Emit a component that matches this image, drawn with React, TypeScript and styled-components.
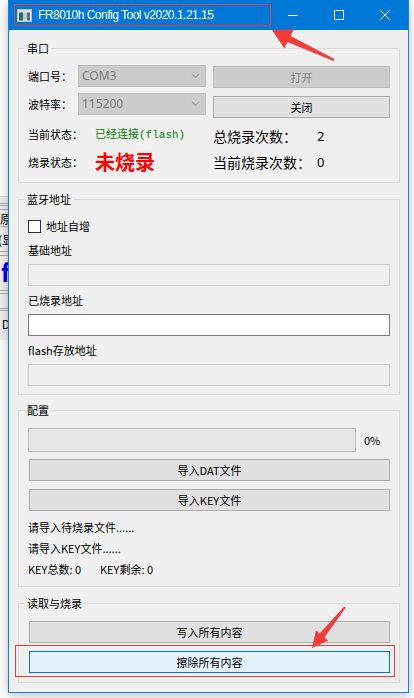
import React from 'react';
import styled, { createGlobalStyle } from 'styled-components';

const Global = createGlobalStyle`
  html, body { margin: 0; padding: 0; background: #ffffff; }
  body {
    width: 414px; height: 698px; overflow: hidden;
    font-family: "Noto Sans CJK SC", "Noto Sans", sans-serif;
  }
  * { box-sizing: border-box; }
`;

const Desktop = styled.div`
  position: relative;
  width: 414px;
  height: 698px;
  overflow: hidden;
  background: #ffffff;
`;

/* ---------- background window peeking at the left ---------- */
const BackWindow = styled.div`
  position: absolute;
  left: -112px;
  top: 196px;
  width: 120px;
  height: 144px;
  background: #f0f0f0;
  border-top: 1px solid #d9d9d9;
  display: flex;
  flex-direction: column;
  align-items: flex-end;
  padding-top: 6px;
`;

const BackRow = styled.div<{ $h: number; $mt?: number; $border?: boolean; $color?: string; $size?: number; $bold?: boolean }>`
  width: 100%;
  height: ${p => p.$h}px;
  margin-top: ${p => p.$mt ?? 0}px;
  border-top: ${p => (p.$border ? '1px solid #adadad' : 'none')};
  border-bottom: ${p => (p.$border ? '1px solid #adadad' : 'none')};
  display: flex;
  align-items: center;
  justify-content: flex-end;
  font-size: ${p => p.$size ?? 12}px;
  font-weight: ${p => (p.$bold ? 700 : 400)};
  color: ${p => p.$color ?? '#000'};
  white-space: nowrap;
  overflow: hidden;
`;

const BackText = styled.span<{ $shift: number }>`
  margin-right: ${p => p.$shift}px;
`;

/* ---------- main window ---------- */
const Window = styled.div`
  position: absolute;
  left: 8px;
  top: 0;
  width: 401px;
  height: 693px;
  border: 1px solid #1a7fd4;
  border-top: none;
  background: #f0f0f0;
  display: flex;
  flex-direction: column;
  box-shadow: 0 2px 10px rgba(0, 0, 0, 0.28);
`;

const TitleBar = styled.header`
  height: 30px;
  flex: none;
  background: #0078d7;
  display: flex;
  align-items: center;
  color: #ffffff;
  padding-left: 8px;
`;

const TitleText = styled.span`
  margin-left: 6px;
  font-family: "Liberation Sans", Arial, sans-serif;
  font-size: 12px;
  letter-spacing: -0.5px;
  line-height: 16px;
  white-space: nowrap;
`;

const Controls = styled.div`
  margin-left: auto;
  display: flex;
  height: 100%;
`;

const Ctrl = styled.div`
  width: 46px;
  height: 30px;
  display: flex;
  align-items: center;
  justify-content: center;
`;

const Body = styled.main`
  flex: 1;
  display: flex;
  flex-direction: column;
  padding: 0 8px 0 9px;
`;

const Group = styled.section<{ $h: number; $mt: number }>`
  position: relative;
  height: ${p => p.$h}px;
  margin-top: ${p => p.$mt}px;
  border: 1px solid #dcdcdc;
  padding: 0 9px;
  flex: none;
`;

const Legend = styled.span`
  position: absolute;
  left: 6px;
  top: -9px;
  padding: 0 2px;
  background: #f0f0f0;
  font-size: 11px;
  line-height: 16px;
  color: #000;
  white-space: nowrap;
`;

const TwoCols = styled.div`
  display: grid;
  grid-template-columns: 178px 177px;
  column-gap: 7px;
`;

const Col = styled.div<{ $pt: number }>`
  display: flex;
  flex-direction: column;
  padding-top: ${p => p.$pt}px;
`;

const Stack = styled.div<{ $pt: number }>`
  display: flex;
  flex-direction: column;
  padding-top: ${p => p.$pt}px;
`;

const Row = styled.div<{ $h: number; $mt?: number; $gap?: number }>`
  display: flex;
  align-items: center;
  height: ${p => p.$h}px;
  margin-top: ${p => p.$mt ?? 0}px;
  gap: ${p => p.$gap ?? 0}px;
  flex: none;
`;

const Label = styled.span<{ $w?: number; $size?: number }>`
  flex: none;
  width: ${p => (p.$w ? `${p.$w}px` : 'auto')};
  font-size: ${p => p.$size ?? 11}px;
  line-height: 1;
  color: #000;
  white-space: nowrap;
`;

const Combo = styled.div`
  width: 128px;
  height: 22px;
  border: 1px solid #bfbfbf;
  background: #cccccc;
  display: flex;
  align-items: center;
  justify-content: space-between;
  padding: 0 5px 0 3px;
  color: #7d7d7d;
  font-family: "Noto Sans", sans-serif;
  font-size: 12px;
  line-height: 1;
`;

const Button = styled.div<{ $variant?: 'normal' | 'disabled' | 'focus'; $mt?: number; $inset?: boolean }>`
  flex: none;
  height: 22px;
  margin-top: ${p => p.$mt ?? 0}px;
  margin-left: ${p => (p.$inset ? 1 : 0)}px;
  width: ${p => (p.$inset ? 'calc(100% - 1px)' : '100%')};
  display: flex;
  align-items: center;
  justify-content: center;
  font-size: 11px;
  line-height: 1;
  white-space: nowrap;
  border: 1px solid
    ${p => (p.$variant === 'disabled' ? '#bfbfbf' : p.$variant === 'focus' ? '#0078d7' : '#adadad')};
  background: ${p => (p.$variant === 'disabled' ? '#cccccc' : p.$variant === 'focus' ? '#e5f1fb' : '#e1e1e1')};
  color: ${p => (p.$variant === 'disabled' ? '#838383' : '#000')};
`;

const GreenText = styled.span`
  color: #008000;
  font-size: 11px;
  line-height: 1;
  white-space: nowrap;
`;

const MonoPart = styled.span`
  font-family: "Liberation Mono", monospace;
  font-size: 11px;
`;

const BurnState = styled.span`
  color: #ff0000;
  font-size: 20px;
  font-weight: 700;
  line-height: 1;
  white-space: nowrap;
`;

const Value = styled.span<{ $size?: number }>`
  font-family: "Noto Sans", sans-serif;
  font-size: ${p => p.$size ?? 13}px;
  line-height: 1;
`;

const Check = styled.span`
  width: 13px;
  height: 13px;
  border: 1px solid #333333;
  background: #ffffff;
  flex: none;
`;

const Input = styled.div<{ $disabled?: boolean; $mt?: number }>`
  height: 22px;
  margin-top: ${p => p.$mt ?? 0}px;
  width: 100%;
  flex: none;
  border: 1px solid ${p => (p.$disabled ? '#cccccc' : '#7a7a7a')};
  background: ${p => (p.$disabled ? '#f0f0f0' : '#ffffff')};
`;

const Progress = styled.div`
  width: 328px;
  height: 24px;
  border: 1px solid #bcbcbc;
  background: #e6e6e6;
  flex: none;
`;

const Overlay = styled.svg`
  position: absolute;
  left: 0;
  top: 0;
  pointer-events: none;
`;

const AppIcon = () => (
  <svg width="15" height="13" viewBox="0 0 15 13">
    <rect x="0.5" y="0.5" width="14" height="12" fill="#eef1f3" stroke="#b7c2cc" />
    <rect x="1.5" y="1.5" width="12" height="2" fill="#d9dfe4" />
    <rect x="2" y="3.5" width="4" height="8" fill="#2f6b5f" />
    <rect x="6" y="3.5" width="4" height="8" fill="#b9cfd4" />
    <rect x="10" y="3.5" width="3" height="8" fill="#5b6d78" />
  </svg>
);

const ChevronDown = () => (
  <svg width="9" height="6" viewBox="0 0 9 6">
    <path d="M1 1 L4.5 4.5 L8 1" fill="none" stroke="#a0a0a0" strokeWidth="1.2" />
  </svg>
);

export default function App() {
  return (
    <Desktop>
      <Global />
      <BackWindow>
        <BackRow $h={3} $border />
        <BackRow $h={18} $mt={3} $border>
          <BackText $shift={-4}>原</BackText>
        </BackRow>
        <BackRow $h={18} $mt={3}>
          <BackText $shift={-6}>(显</BackText>
        </BackRow>
        <BackRow $h={5} $mt={3} $border />
        <BackRow $h={26} $mt={2} $color="#0000ee" $size={24} $bold>
          <BackText $shift={-2}>f</BackText>
        </BackRow>
        <BackRow $h={4} $mt={6} $border />
        <BackRow $h={3} $mt={14} $border />
        <BackRow $h={17} $mt={4}>
          <BackText $shift={-2}>D</BackText>
        </BackRow>
      </BackWindow>

      <Window>
        <TitleBar>
          <AppIcon />
          <TitleText>FR8010h Config Tool v2020.1.21.15</TitleText>
          <Controls>
            <Ctrl>
              <svg width="10" height="10" viewBox="0 0 10 10">
                <path d="M0 5.5 H10" stroke="#fff" strokeWidth="1" />
              </svg>
            </Ctrl>
            <Ctrl>
              <svg width="10" height="10" viewBox="0 0 10 10">
                <rect x="0.5" y="0.5" width="9" height="9" fill="none" stroke="#fff" strokeWidth="1" />
              </svg>
            </Ctrl>
            <Ctrl>
              <svg width="10" height="10" viewBox="0 0 10 10">
                <path d="M0 0 L10 10 M10 0 L0 10" stroke="#fff" strokeWidth="1" />
              </svg>
            </Ctrl>
          </Controls>
        </TitleBar>

        <Body>
          <Group $h={135} $mt={18}>
            <Legend>串口</Legend>
            <TwoCols>
              <Col $pt={16}>
                <Row $h={22}>
                  <Label $w={50}>端口号：</Label>
                  <Combo>
                    <span>COM3</span>
                    <ChevronDown />
                  </Combo>
                </Row>
                <Row $h={22} $mt={6}>
                  <Label $w={50}>波特率：</Label>
                  <Combo>
                    <span>115200</span>
                    <ChevronDown />
                  </Combo>
                </Row>
                <Row $h={20} $mt={9}>
                  <Label $w={67}>当前状态：</Label>
                  <GreenText>
                    已经连接<MonoPart>(flash)</MonoPart>
                  </GreenText>
                </Row>
                <Row $h={24} $mt={6}>
                  <Label $w={67}>烧录状态：</Label>
                  <BurnState>未烧录</BurnState>
                </Row>
              </Col>
              <Col $pt={17}>
                <Button $variant="disabled">打开</Button>
                <Button $mt={8}>关闭</Button>
                <Row $h={20} $mt={8}>
                  <Label $w={104} $size={14}>总烧录次数：</Label>
                  <Value>2</Value>
                </Row>
                <Row $h={20} $mt={6}>
                  <Label $w={104} $size={14}>当前烧录次数：</Label>
                  <Value>0</Value>
                </Row>
              </Col>
            </TwoCols>
          </Group>

          <Group $h={196} $mt={16}>
            <Legend>蓝牙地址</Legend>
            <Stack $pt={16}>
              <Row $h={20} $gap={5}>
                <Check />
                <Label>地址自增</Label>
              </Row>
              <Row $h={20} $mt={4}>
                <Label>基础地址</Label>
              </Row>
              <Input $disabled $mt={4} />
              <Row $h={20} $mt={4}>
                <Label>已烧录地址</Label>
              </Row>
              <Input $mt={4} />
              <Row $h={20} $mt={4}>
                <Label>flash存放地址</Label>
              </Row>
              <Input $disabled $mt={4} />
            </Stack>
          </Group>

          <Group $h={177} $mt={15}>
            <Legend>配置</Legend>
            <Stack $pt={17}>
              <Row $h={24} $gap={8}>
                <Progress />
                <Label>0%</Label>
              </Row>
              <Button $mt={7} $inset>导入DAT文件</Button>
              <Button $mt={8} $inset>导入KEY文件</Button>
              <Row $h={20} $mt={6}>
                <Label>请导入待烧录文件......</Label>
              </Row>
              <Row $h={20} $mt={1}>
                <Label>请导入KEY文件......</Label>
              </Row>
              <Row $h={20} $mt={1}>
                <Label $w={72}>KEY总数: 0</Label>
                <Label>KEY剩余: 0</Label>
              </Row>
            </Stack>
          </Group>

          <Group $h={80} $mt={16}>
            <Legend>读取与烧录</Legend>
            <Stack $pt={17}>
              <Button $inset>写入所有内容</Button>
              <Button $mt={8} $inset $variant="focus">擦除所有内容</Button>
            </Stack>
          </Group>
        </Body>
      </Window>

      <Overlay width="414" height="698" viewBox="0 0 414 698">
        <rect x="14.5" y="4.5" width="256" height="21" fill="none" stroke="#f03a3a" strokeWidth="1" />
        <rect x="15.5" y="645.5" width="379" height="31" fill="none" stroke="#f03a3a" strokeWidth="1" />
        <polygon
          points="272,30 293.6,29.6 290.5,35.9 334.4,59.1 333.6,60.9 287.5,42.1 284.4,48.4"
          fill="#f23c3c"
        />
        <polygon
          points="312,648 328.2,640.5 324.3,637.4 345.8,607.4 344.2,606.6 319.7,633.6 315.8,630.5"
          fill="#f23c3c"
        />
      </Overlay>
    </Desktop>
  );
}
